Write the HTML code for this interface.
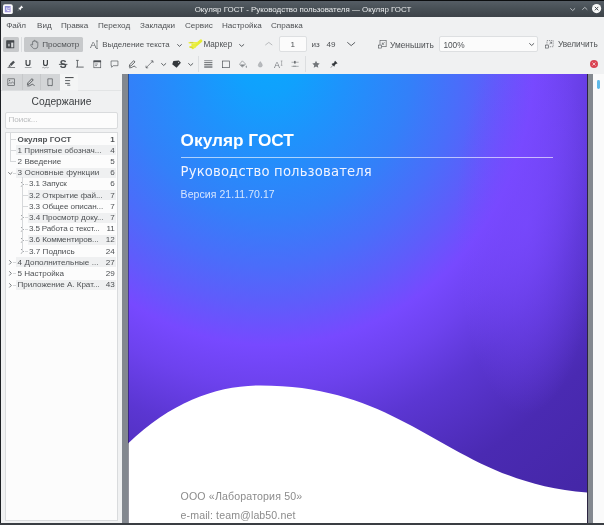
<!DOCTYPE html>
<html lang="ru">
<head>
<meta charset="utf-8">
<title>Окуляр ГОСТ</title>
<style>
*{box-sizing:border-box;margin:0;padding:0}
html,body{width:604px;height:525px;overflow:hidden;background:#f0f1f2}
body{position:relative;will-change:transform;font-family:"Liberation Sans","DejaVu Sans",sans-serif;font-size:8px;color:#4e5154}
.abs{position:absolute}
.t{position:absolute;white-space:nowrap;line-height:10px;height:10px}
#titlebar{left:0;top:0;width:604px;height:16.8px;background:linear-gradient(#575f67 0%,#485056 50%,#3d4349 100%)}
#topedge{left:0;top:0;width:604px;height:1.2px;background:#0c0e10}
#title{left:1px;width:604px;top:4.9px;text-align:center;color:#e9ebec;font-size:7.93px}
#leftedge{left:0;top:0;width:1.2px;height:525px;background:#1d2024}
#bottomedge{left:0;top:523.3px;width:604px;height:1.7px;background:#3a3e43}
.menu{top:21.3px;font-size:8.1px}
.tb{top:40.2px;font-size:8.1px}
.pressed{background:#c7c9cb;border-radius:1.5px}
.sep{width:1px;background:#dcdee0}
svg{position:absolute;overflow:visible}
svg text{font-family:"Liberation Sans","DejaVu Sans",sans-serif}
.row{position:absolute;height:11.2px;right:0}
.alt{position:absolute;height:10px;background:#eff0f1}
.rt{position:absolute;line-height:10px;height:10px;font-size:8.1px;white-space:nowrap}
.rn{position:absolute;line-height:10px;height:10px;font-size:8.1px;white-space:nowrap;text-align:right;width:20px;left:95px}
.ln{position:absolute;background:#d6d8da}
</style>
</head>
<body>
<!-- title bar -->
<div id="titlebar" class="abs"></div>
<div id="topedge" class="abs"></div>
<div id="title" class="t">Окуляр ГОСТ - Руководство пользователя — Окуляр ГОСТ</div>
<svg style="left:3.3px;top:3.6px" width="9.8" height="10.4" viewBox="0 0 16 16" ><defs><linearGradient id="ag" x1="0" y1="0" x2="1" y2="1"><stop offset="0" stop-color="#7d84cf"/><stop offset="1" stop-color="#bca9e4"/></linearGradient></defs><rect x="0" y="0" width="16" height="16" rx="3" fill="#fbfbfd"/><rect x="3" y="2.8" width="9.6" height="10.2" rx="1" fill="url(#ag)"/><path d="M6.3 5.2 V8.6 Q6.3 10.2 7.9 10.2 H10.6" fill="none" stroke="#fff" stroke-width="1.5"/><path d="M8.4 6.6 L9.6 7.6 L11.6 5.2" fill="none" stroke="#fff" stroke-width="1"/></svg>
<svg style="left:17.2px;top:5.3px" width="6.6" height="6.6" viewBox="0 0 16 16" ><path d="M10.2 1 L15 5.8 L13.6 7.2 L12.6 6.6 L9.4 9.8 L9.4 12 L8.2 12.6 L6 10.4 L1.6 14.8 L1 15 L1.2 14.4 L5.6 10 L3.4 7.8 L4 6.6 L6.2 6.6 L9.4 3.4 L8.8 2.4 Z" fill="#fbfbfc"/></svg>
<svg style="left:569.6px;top:7.7px" width="5.4" height="3" viewBox="0 0 5.4 3"><polyline points="0.3,0.3 2.7,2.6 5.1000000000000005,0.3" fill="none" stroke="#c2c6c9" stroke-width="0.9"/></svg>
<svg style="left:581.6px;top:7.1px" width="5.6" height="3" viewBox="0 0 5.6 3"><polyline points="0.3,2.7 2.8,0.4 5.3,2.7" fill="none" stroke="#c2c6c9" stroke-width="0.9"/></svg>
<svg style="left:592.2px;top:4px" width="9.2" height="9.2" viewBox="0 0 16 16" ><circle cx="8" cy="8" r="8" fill="#f7f8f8"/><path d="M5 5 L11 11 M11 5 L5 11" stroke="#41474d" stroke-width="1.7"/></svg>
<!-- menu bar -->
<div class="t menu" style="left:6.2px">Файл</div>
<div class="t menu" style="left:37px">Вид</div>
<div class="t menu" style="left:61px">Правка</div>
<div class="t menu" style="left:98px">Переход</div>
<div class="t menu" style="left:140px">Закладки</div>
<div class="t menu" style="left:185px">Сервис</div>
<div class="t menu" style="left:222px">Настройка</div>
<div class="t menu" style="left:271px">Справка</div>
<!-- toolbar 1 -->
<div class="abs pressed" style="left:2.5px;top:36.5px;width:16px;height:15.6px"></div>
<svg style="left:6.3px;top:40.3px" width="8.6" height="8.6" viewBox="0 0 16 16" ><rect x="1.5" y="1.5" width="13" height="13" fill="#d9dbdc" stroke="#44484c" stroke-width="1.6"/><rect x="1" y="1" width="14" height="3.8" fill="#44484c"/><rect x="1" y="4" width="8.6" height="11" fill="#44484c"/><rect x="3.6" y="7" width="3.6" height="5" fill="#a9acaf"/></svg>
<div class="abs sep" style="left:20.8px;top:37px;height:15px"></div>
<div class="abs pressed" style="left:24px;top:36.5px;width:58.8px;height:15.6px"></div>
<svg style="left:29.7px;top:40.1px" width="8.4" height="9.2" viewBox="1.6 0.8 11.6 14.4" preserveAspectRatio="none"><path d="M5.2 8.6 V3.6 Q5.2 2.6 6.1 2.6 Q7 2.6 7 3.6 V2.4 Q7 1.4 7.9 1.4 Q8.8 1.4 8.8 2.4 V3.2 Q8.8 2.3 9.7 2.3 Q10.6 2.3 10.6 3.3 V4.6 Q10.6 3.7 11.5 3.7 Q12.4 3.7 12.4 4.7 V10.4 Q12.4 14.4 8.8 14.4 H8 Q6.2 14.4 5 12.6 L2.6 9 Q2.2 8.2 2.9 7.7 Q3.6 7.3 4.2 8 Z" fill="none" stroke="#5d6165" stroke-width="1.05" stroke-linejoin="round"/></svg>
<div class="t tb" style="left:42.2px;letter-spacing:.02px">Просмотр</div>
<svg style="left:0;top:0" width="110" height="56" viewBox="0 0 110 56"><text x="89.9" y="48.2" font-size="9.6" fill="#666a6e">A</text><path d="M96 40.9 H97 V48.5 H96 M97 40.9 H98 M97 48.5 H98" fill="none" stroke="#666a6e" stroke-width=".7"/></svg>
<div class="t tb" style="left:102.3px;font-size:7.9px">Выделение текста</div>
<svg style="left:177.3px;top:43.6px" width="5" height="2.8" viewBox="0 0 5 2.8"><polyline points="0.3,0.3 2.5,2.4 4.7,0.3" fill="none" stroke="#4b4f53" stroke-width="0.9"/></svg>
<svg style="left:0;top:0" width="210" height="56" viewBox="0 0 210 56"><path d="M200.9 40.9 L192.8 47.6" stroke="#e6ec34" stroke-width="3" stroke-linecap="round" fill="none"/><path d="M189.2 42.7 H197.2" stroke="#eaef45" stroke-width="1.5" stroke-linecap="round" fill="none"/><path d="M190 46.9 H195" stroke="#eaef45" stroke-width="1.7" stroke-linecap="round" fill="none"/><path d="M191.4 44.8 H196" stroke="#e9ee3c" stroke-width="2.6" fill="none"/><path d="M189.9 42.4 H193.2 M189.9 47.4 H192.6" stroke="#9a8c3a" stroke-width=".45" fill="none" opacity=".8"/></svg>
<div class="t tb" style="left:203.4px;font-size:8.2px">Маркер</div>
<svg style="left:239.4px;top:43.6px" width="5.4" height="2.8" viewBox="0 0 5.4 2.8"><polyline points="0.3,0.3 2.7,2.4 5.1000000000000005,0.3" fill="none" stroke="#4b4f53" stroke-width="0.9"/></svg>
<svg style="left:264.6px;top:42.2px" width="7.6" height="3.4" viewBox="0 0 7.6 3.4"><polyline points="0.3,3.1 3.8,0.4 7.3,3.1" fill="none" stroke="#a9acaf" stroke-width="0.8"/></svg>
<div class="abs" style="left:279.3px;top:36px;width:27.7px;height:16.4px;background:#fbfbfb;border:1px solid #dddfe1;border-radius:2px"></div>
<div class="t tb" style="left:290.4px">1</div>
<div class="t tb" style="left:311.6px">из</div>
<div class="t tb" style="left:326.6px">49</div>
<svg style="left:347px;top:42.4px" width="8.4" height="4" viewBox="0 0 8.4 4"><polyline points="0.3,0.3 4.2,3.6 8.1,0.3" fill="none" stroke="#4b4f53" stroke-width="0.9"/></svg>
<svg style="left:378px;top:40.4px" width="8.8" height="8.6" viewBox="0 0 16 16" ><rect x="3.5" y="1" width="11.5" height="11.5" fill="none" stroke="#4b4f53" stroke-width="1.1"/><rect x="1" y="9.5" width="5.5" height="5.5" fill="#f0f1f2" stroke="#4b4f53" stroke-width="1.1"/><path d="M12 4 L8 8 M8 4.8 V8 H11.2" fill="none" stroke="#4b4f53" stroke-width="1.1"/></svg>
<div class="t tb" style="left:390px;font-size:8.35px">Уменьшить</div>
<div class="abs" style="left:439.3px;top:35.6px;width:98.4px;height:16.8px;background:#fbfbfb;border:1px solid #dddfe1;border-radius:2px"></div>
<div class="t tb" style="left:443.4px;font-size:8.3px">100%</div>
<svg style="left:529.2px;top:43.2px" width="5.4" height="2.9" viewBox="0 0 5.4 2.9"><polyline points="0.3,0.3 2.7,2.5 5.1000000000000005,0.3" fill="none" stroke="#4b4f53" stroke-width="0.9"/></svg>
<svg style="left:544.6px;top:40.4px" width="8.8" height="8.6" viewBox="0 0 16 16" ><rect x="3.5" y="1" width="11.5" height="11.5" fill="none" stroke="#4b4f53" stroke-width="1.1" stroke-dasharray="2.2 1.6"/><rect x="1" y="9.5" width="5.5" height="5.5" fill="#f0f1f2" stroke="#4b4f53" stroke-width="1.1"/><path d="M8 8 L12 4 M8.8 4 H12 V7.2" fill="none" stroke="#4b4f53" stroke-width="1.1"/></svg>
<div class="t tb" style="left:557.9px;font-size:8.25px">Увеличить</div>
<!-- toolbar 2 -->
<svg style="left:6.5px;top:59.8px" width="8.6" height="8.6" viewBox="0 0 16 16" ><path d="M11.6 1.2 L14.8 4.4 L8 11.2 L4.8 8 Z M4.2 8.8 L7.2 11.8 L5.8 12.4 H2.6 Z" fill="#4b4f53"/><rect x="1" y="13.6" width="14" height="1.3" fill="#4b4f53"/></svg>
<svg style="left:0;top:0" width="100" height="75" viewBox="0 0 100 75"><text x="28.1" y="65.9" font-size="8.3" font-weight="bold" text-anchor="middle" fill="#3f4346">U</text><rect x="24.8" y="67.2" width="6.7" height=".75" fill="#8c8f92"/><text x="45.5" y="65.9" font-size="8.3" font-weight="bold" text-anchor="middle" fill="#3f4346">U</text><path d="M42.3 67.8 Q43.1 66.8 43.9 67.6 T45.5 67.6 T47.1 67.6 T48.7 67.4" fill="none" stroke="#7d8084" stroke-width=".7"/><text x="63.2" y="67.5" font-size="10.3" font-weight="bold" text-anchor="middle" fill="#4a4e52">S</text><rect x="58.9" y="63.9" width="8.5" height=".85" fill="#3f4346"/><path d="M76.1 60.4 H78.7 M77.4 60.4 V67.1 M76.1 67.1 H83.7" fill="none" stroke="#585c60" stroke-width=".9"/></svg>
<svg style="left:93px;top:59.8px" width="8.6" height="8.6" viewBox="0 0 16 16" ><rect x="1.6" y="1.6" width="12.8" height="12.8" fill="none" stroke="#4b4f53" stroke-width="1.2"/><rect x="1" y="1" width="14" height="3.2" fill="#4b4f53"/><path d="M4 7.5 H9 M4 10.5 H7.5" stroke="#4b4f53" stroke-width="1.1"/></svg>
<svg style="left:109.8px;top:59.8px" width="9" height="8.6" viewBox="0 0 16 16" ><path d="M1.6 1.8 H14.4 V10.6 H5.6 L2.6 13.6 V10.6 H1.6 Z" fill="none" stroke="#4b4f53" stroke-width="1.2" stroke-linejoin="round"/></svg>
<svg style="left:127.6px;top:59.8px" width="8.6" height="8.6" viewBox="0 0 16 16" ><path d="M10.6 1.2 L13 3.6 L5.6 11 L2.4 12 L3.4 8.6 Z" fill="none" stroke="#3f4346" stroke-width="1.5" stroke-linejoin="round"/><path d="M2 14.4 Q6 15.2 9 12.6 Q11.6 10.4 13.2 12 Q14.4 13.4 15.4 14.6" fill="none" stroke="#3f4346" stroke-width="1.4"/></svg>
<svg style="left:145.2px;top:59.8px" width="8.9" height="8.6" viewBox="0 0 16 16" ><path d="M1.6 14.6 L14.6 1.6 M10.6 1.6 H14.6 V5.6 M1.6 10.6 V14.6 H5.6" fill="none" stroke="#44484c" stroke-width="1.15"/></svg>
<svg style="left:160.5px;top:63.1px" width="5.4" height="2.9" viewBox="0 0 5.4 2.9"><polyline points="0.3,0.3 2.7,2.5 5.1000000000000005,0.3" fill="none" stroke="#4b4f53" stroke-width="0.9"/></svg>
<svg style="left:0;top:0" width="200" height="75" viewBox="0 0 200 75"><path d="M173.4 60.9 L178.9 60.6 L180.9 62.8 L176.6 67.8 L172.2 64.3 Z" fill="#34383c"/><circle cx="178.6" cy="62.4" r=".55" fill="#c9cbcd"/></svg>
<svg style="left:188px;top:63.1px" width="5.4" height="2.9" viewBox="0 0 5.4 2.9"><polyline points="0.3,0.3 2.7,2.5 5.1000000000000005,0.3" fill="none" stroke="#4b4f53" stroke-width="0.9"/></svg>
<div class="abs sep" style="left:198px;top:55.5px;height:16px"></div>
<svg style="left:0;top:0" width="220" height="75" viewBox="0 0 220 75"><rect x="204.2" y="60.5" width="8.2" height=".6" fill="#4b4f53"/><rect x="204.2" y="62.3" width="8.2" height=".8" fill="#4b4f53"/><rect x="204.2" y="64.3" width="8.2" height="1" fill="#4b4f53"/><rect x="204.2" y="66.4" width="8.2" height="1.25" fill="#5d6165"/></svg>
<svg style="left:221.8px;top:59.8px" width="8.2" height="8.6" viewBox="0 0 16 16" ><rect x="1.2" y="1.6" width="13.6" height="13" fill="none" stroke="#4b4f53" stroke-width="1.3"/></svg>
<svg style="left:239px;top:59.8px" width="8.4" height="8.6" viewBox="0 0 16 16" ><path d="M6.4 1.4 L12.6 7.6 L7.6 12.6 Q6.4 13.6 5.2 12.6 L1.8 9.2 Q0.8 8 1.8 7 Z" fill="none" stroke="#7d8185" stroke-width="1.2" stroke-linejoin="round"/><path d="M2.2 8.2 H11.6 L7.2 12.4 H5.6 Z" fill="#7d8185"/><path d="M13.6 9.6 Q15.4 12.4 15 13.4 Q14.4 14.8 13.2 14.2 Q12 13.2 13.6 9.6 Z" fill="#7d8185"/></svg>
<svg style="left:257px;top:59.8px" width="6.6" height="8.6" viewBox="0 0 16 16" ><path d="M8 1.4 Q13.4 8.2 13 10.8 Q12.4 14.8 8 14.8 Q3.6 14.8 3 10.8 Q2.6 8.2 8 1.4 Z" fill="#b7babd" stroke="#9b9ea2" stroke-width="1"/></svg>
<svg style="left:273.8px;top:59.8px" width="8.4" height="8.6" viewBox="0 0 16 16" ><text x="0" y="14.4" font-size="17" fill="#7a7e82">A</text><path d="M13 1.6 H16 M14.5 1.6 V10 M13 10 H16" fill="none" stroke="#7a7e82" stroke-width="1"/></svg>
<svg style="left:291.3px;top:59.8px" width="8.2" height="8.6" viewBox="0 0 16 16" ><path d="M1 4 H15 M1 12 H15" stroke="#7a7e82" stroke-width="1.1"/><rect x="6.4" y="1.4" width="2.4" height="5.2" fill="#4b4f53"/><rect x="4" y="10.8" width="6" height="2.4" fill="#9a9da0"/></svg>
<div class="abs sep" style="left:305.2px;top:55.5px;height:16px"></div>
<svg style="left:312px;top:59.8px" width="8" height="8.6" viewBox="0 0 16 16" ><path d="M8 0.8 L10.2 5.6 L15.4 6.2 L11.6 9.8 L12.6 15 L8 12.4 L3.4 15 L4.4 9.8 L0.6 6.2 L5.8 5.6 Z" fill="#72767a"/></svg>
<svg style="left:330.2px;top:59.8px" width="8" height="8.6" viewBox="0 0 16 16" ><path d="M10.2 1 L15 5.8 L13.6 7.2 L12.6 6.6 L9.4 9.8 L9.4 12 L8.2 12.6 L6 10.4 L1.6 14.8 L1 15 L1.2 14.4 L5.6 10 L3.4 7.8 L4 6.6 L6.2 6.6 L9.4 3.4 L8.8 2.4 Z" fill="#33373b"/></svg>
<svg style="left:590.4px;top:59.9px" width="8" height="8" viewBox="0 0 16 16" ><circle cx="8" cy="8" r="8" fill="#da4453"/><path d="M5 5 L11 11 M11 5 L5 11" stroke="#f6d9dc" stroke-width="1.7"/></svg>
<!-- sidebar -->
<div class="abs" style="left:2px;top:74px;width:57.8px;height:16px;background:#d3d5d7"></div>
<div class="abs" style="left:21.6px;top:74px;width:.6px;height:16px;background:#c6c8ca"></div>
<div class="abs" style="left:40.2px;top:74px;width:.6px;height:16px;background:#c6c8ca"></div>
<div class="abs" style="left:59.8px;top:74px;width:18.4px;height:16px;background:#f4f5f5"></div>
<div class="abs" style="left:1.2px;top:89.6px;width:58.6px;height:.8px;background:#dcdee0"></div>
<div class="abs" style="left:78.2px;top:89.6px;width:43px;height:.8px;background:#e2e4e5"></div>
<svg style="left:7.3px;top:77.8px" width="8.4" height="8.4" viewBox="0 0 16 16" ><rect x="1.6" y="1.6" width="12.8" height="12.8" fill="none" stroke="#4b4f53" stroke-width="1.2"/><path d="M2 12 L5.6 8.4 L7.6 10.4 L10.2 7.4 L14 10.6" fill="none" stroke="#4b4f53" stroke-width="1.1"/><circle cx="5" cy="5" r="1.1" fill="#4b4f53"/></svg>
<svg style="left:25.8px;top:77.6px" width="9" height="8.8" viewBox="0 0 16 16" ><path d="M10.6 1.2 L13 3.6 L5.6 11 L2.4 12 L3.4 8.6 Z" fill="none" stroke="#3f4346" stroke-width="1.5" stroke-linejoin="round"/><path d="M2 14.4 Q6 15.2 9 12.6 Q11.6 10.4 13.2 12 Q14.4 13.4 15.4 14.6" fill="none" stroke="#3f4346" stroke-width="1.4"/></svg>
<svg style="left:47px;top:77.7px" width="6.2" height="8.2" viewBox="0 0 12 16" ><path d="M1.6 1.6 H10.4 V14.6 H1.6 Z" fill="none" stroke="#4b4f53" stroke-width="1.3"/><path d="M3 14.8 V16 M9 14.8 V16" stroke="#4b4f53" stroke-width="1"/></svg>
<svg style="left:0;top:0" width="100" height="95" viewBox="0 0 100 95"><path d="M65.1 77.6 H73.6" stroke="#3f4346" stroke-width="1"/><path d="M65.1 80.6 H70.2 M65.1 83.4 H69.8" stroke="#4d5155" stroke-width=".9"/><path d="M67.2 85.2 H70.3" stroke="#4d5155" stroke-width=".8"/></svg>
<div class="t" style="left:1px;width:121px;top:94.8px;text-align:center;font-size:10.25px;line-height:13px;height:13px;color:#3e4144">Содержание</div>
<div class="abs" style="left:5.2px;top:111.6px;width:112.4px;height:17px;background:#fcfcfc;border:1px solid #d9dbdd;border-radius:2px"></div>
<div class="t" style="left:8.4px;top:115.4px;font-size:8.1px;color:#b9bbbd">Поиск...</div>
<div id="tree" class="abs" style="left:5.2px;top:132.2px;width:112.4px;height:388.4px;background:#fcfcfc;border:1px solid #d9dbdd;overflow:hidden">
<div class="ln" style="left:4.1px;top:5.9px;width:6.1px;height:.6px"></div>
<div class="rt" style="left:11.4px;top:1.5px;font-weight:bold;letter-spacing:0.057px">Окуляр ГОСТ</div><div class="rn" style="left:88.7px;top:1.5px;font-weight:bold;">1</div>
<div class="alt" style="left:10.2px;top:12.2px;width:99.2px"></div>
<div class="ln" style="left:4.1px;top:17.1px;width:6.1px;height:.6px"></div>
<div class="rt" style="left:11.4px;top:12.7px;letter-spacing:0.013px">1 Принятые обознач...</div><div class="rn" style="left:88.7px;top:12.7px;">4</div>
<div class="ln" style="left:4.1px;top:28.3px;width:6.1px;height:.6px"></div>
<div class="rt" style="left:11.4px;top:23.9px;letter-spacing:0.029px">2 Введение</div><div class="rn" style="left:88.7px;top:23.9px;">5</div>
<div class="alt" style="left:10.2px;top:34.6px;width:99.2px"></div>
<div class="ln" style="left:6.7px;top:39.5px;width:3.5px;height:.6px"></div>
<div class="rt" style="left:11.4px;top:35.1px;letter-spacing:0.121px">3 Основные функции</div><div class="rn" style="left:88.7px;top:35.1px;">6</div>
<svg style="left:1.9999999999999991px;top:38.599999999999994px" width="4.6" height="2.6" viewBox="0 0 4.6 2.6"><polyline points="0.3,0.3 2.3,2.2 4.3,0.3" fill="none" stroke="#55595d" stroke-width="0.8"/></svg>
<div class="ln" style="left:18.8px;top:50.7px;width:2.8px;height:.6px"></div>
<div class="rt" style="left:22.8px;top:46.3px;letter-spacing:-0.103px">3.1 Запуск</div><div class="rn" style="left:88.7px;top:46.3px;">6</div>
<svg style="left:14.7px;top:48.70000000000001px" width="2.7" height="4.8" viewBox="0 0 2.7 4.8"><polyline points="0.3,0.3 2.3000000000000003,2.4 0.3,4.5" fill="none" stroke="#55595d" stroke-width="0.8"/></svg>
<div class="alt" style="left:21.6px;top:57.0px;width:87.8px"></div>
<div class="ln" style="left:16.2px;top:61.9px;width:5.4px;height:.6px"></div>
<div class="rt" style="left:22.8px;top:57.5px;letter-spacing:-0.067px">3.2 Открытие фай...</div><div class="rn" style="left:88.7px;top:57.5px;">7</div>
<div class="ln" style="left:16.2px;top:73.1px;width:5.4px;height:.6px"></div>
<div class="rt" style="left:22.8px;top:68.7px;letter-spacing:-0.07px">3.3 Общее описан...</div><div class="rn" style="left:88.7px;top:68.7px;">7</div>
<div class="alt" style="left:21.6px;top:79.4px;width:87.8px"></div>
<div class="ln" style="left:18.8px;top:84.3px;width:2.8px;height:.6px"></div>
<div class="rt" style="left:22.8px;top:79.9px;letter-spacing:-0.053px">3.4 Просмотр доку...</div><div class="rn" style="left:88.7px;top:79.9px;">7</div>
<svg style="left:14.7px;top:82.29999999999998px" width="2.7" height="4.8" viewBox="0 0 2.7 4.8"><polyline points="0.3,0.3 2.3000000000000003,2.4 0.3,4.5" fill="none" stroke="#55595d" stroke-width="0.8"/></svg>
<div class="ln" style="left:18.8px;top:95.5px;width:2.8px;height:.6px"></div>
<div class="rt" style="left:22.8px;top:91.1px;letter-spacing:-0.172px">3.5 Работа с текст...</div><div class="rn" style="left:88.7px;top:91.1px;">11</div>
<svg style="left:14.7px;top:93.5px" width="2.7" height="4.8" viewBox="0 0 2.7 4.8"><polyline points="0.3,0.3 2.3000000000000003,2.4 0.3,4.5" fill="none" stroke="#55595d" stroke-width="0.8"/></svg>
<div class="alt" style="left:21.6px;top:101.8px;width:87.8px"></div>
<div class="ln" style="left:18.8px;top:106.7px;width:2.8px;height:.6px"></div>
<div class="rt" style="left:22.8px;top:102.3px;letter-spacing:-0.089px">3.6 Комментиров...</div><div class="rn" style="left:88.7px;top:102.3px;">12</div>
<svg style="left:14.7px;top:104.70000000000002px" width="2.7" height="4.8" viewBox="0 0 2.7 4.8"><polyline points="0.3,0.3 2.3000000000000003,2.4 0.3,4.5" fill="none" stroke="#55595d" stroke-width="0.8"/></svg>
<div class="ln" style="left:18.8px;top:117.9px;width:2.8px;height:.6px"></div>
<div class="rt" style="left:22.8px;top:113.5px;letter-spacing:0.015px">3.7 Подпись</div><div class="rn" style="left:88.7px;top:113.5px;">24</div>
<svg style="left:14.7px;top:115.9px" width="2.7" height="4.8" viewBox="0 0 2.7 4.8"><polyline points="0.3,0.3 2.3000000000000003,2.4 0.3,4.5" fill="none" stroke="#55595d" stroke-width="0.8"/></svg>
<div class="alt" style="left:10.2px;top:124.2px;width:99.2px"></div>
<div class="ln" style="left:6.7px;top:129.1px;width:3.5px;height:.6px"></div>
<div class="rt" style="left:11.4px;top:124.7px;letter-spacing:0.059px">4 Дополнительные ...</div><div class="rn" style="left:88.7px;top:124.7px;">27</div>
<svg style="left:2.7px;top:127.1px" width="2.7" height="4.8" viewBox="0 0 2.7 4.8"><polyline points="0.3,0.3 2.3000000000000003,2.4 0.3,4.5" fill="none" stroke="#55595d" stroke-width="0.8"/></svg>
<div class="ln" style="left:6.7px;top:140.3px;width:3.5px;height:.6px"></div>
<div class="rt" style="left:11.4px;top:135.9px;letter-spacing:-0.028px">5 Настройка</div><div class="rn" style="left:88.7px;top:135.9px;">29</div>
<svg style="left:2.7px;top:138.29999999999998px" width="2.7" height="4.8" viewBox="0 0 2.7 4.8"><polyline points="0.3,0.3 2.3000000000000003,2.4 0.3,4.5" fill="none" stroke="#55595d" stroke-width="0.8"/></svg>
<div class="alt" style="left:10.2px;top:146.6px;width:99.2px"></div>
<div class="ln" style="left:6.7px;top:151.5px;width:3.5px;height:.6px"></div>
<div class="rt" style="left:11.4px;top:147.1px;letter-spacing:-0.034px">Приложение А. Крат...</div><div class="rn" style="left:88.7px;top:147.1px;">43</div>
<svg style="left:2.7px;top:149.49999999999997px" width="2.7" height="4.8" viewBox="0 0 2.7 4.8"><polyline points="0.3,0.3 2.3000000000000003,2.4 0.3,4.5" fill="none" stroke="#55595d" stroke-width="0.8"/></svg>
<div class="ln" style="left:4.1px;top:0;width:.6px;height:28.4px"></div>
<div class="ln" style="left:16.2px;top:43.6px;width:.6px;height:76.4px"></div>
</div>
<!-- document area -->
<div class="abs" style="left:122px;top:74px;width:471.4px;height:451px;background:#83888f"></div>
<div class="abs" style="left:593.4px;top:74px;width:10.6px;height:451px;background:#fafafa"></div>
<div class="abs" style="left:597.4px;top:79.6px;width:2.8px;height:9.4px;background:#5fb9e8;border-radius:1.4px"></div>
<div class="abs" style="left:587px;top:74px;width:1.3px;height:451px;background:#2b2440"></div>
<div id="page" class="abs" style="left:128px;top:74px;width:459px;height:451px;overflow:hidden;background:
 radial-gradient(ellipse 70px 190px at 398px 150px, rgba(121,73,255,.75) 0%, rgba(121,73,255,.45) 45%, rgba(121,73,255,0) 100%),
 radial-gradient(ellipse 530px 570px at 141px -14px, #0ca6fd 0%, #10a1fd 6%, #1f92fc 15%, #3380f9 27%, #4a6dfa 36%, #5f5cfb 43%, #7749ff 50%, #6d42ee 57%, #5b36d2 66%, #4a2ab2 80%, #4326a4 100%)">
<svg width="459" height="451" viewBox="0 0 459 451" style="left:0;top:0">
<path d="M0,369.5 C43.8,327.6 88.9,311.4 132.5,311.4 C283.7,311.4 320,407.8 459,418.5 L459,451 L0,451 Z" fill="#ffffff"/>
</svg>
<div class="abs" style="left:0;top:0;width:1px;height:451px;background:rgba(20,20,40,.45)"></div>
<div class="t" style="left:52.6px;top:55.5px;font-size:17.25px;line-height:20px;height:20px;font-weight:bold;color:#fff">Окуляр ГОСТ</div>
<div class="abs" style="left:53px;top:82.9px;width:372px;height:.8px;background:rgba(255,255,255,.62)"></div>
<div class="t" style="left:52.6px;top:90.2px;font-family:'DejaVu Sans','Liberation Sans',sans-serif;font-size:13.2px;letter-spacing:.15px;line-height:16px;height:16px;color:#f2f4ff">Руководство пользователя</div>
<div class="t" style="left:52.6px;top:113.9px;font-size:10.5px;letter-spacing:.06px;line-height:12px;height:12px;color:rgba(255,255,255,.8)">Версия 21.11.70.17</div>
<div class="t" style="left:52.6px;top:416px;font-size:10.6px;line-height:12px;height:12px;color:#8c8c8c;letter-spacing:.15px">ООО «Лаборатория 50»</div>
<div class="t" style="left:52.6px;top:434.7px;font-size:10.6px;line-height:12px;height:12px;color:#8c8c8c;letter-spacing:.1px">e-mail: team@lab50.net</div>
</div>

<div id="leftedge" class="abs"></div>
<div id="bottomedge" class="abs"></div>
</body>
</html>
